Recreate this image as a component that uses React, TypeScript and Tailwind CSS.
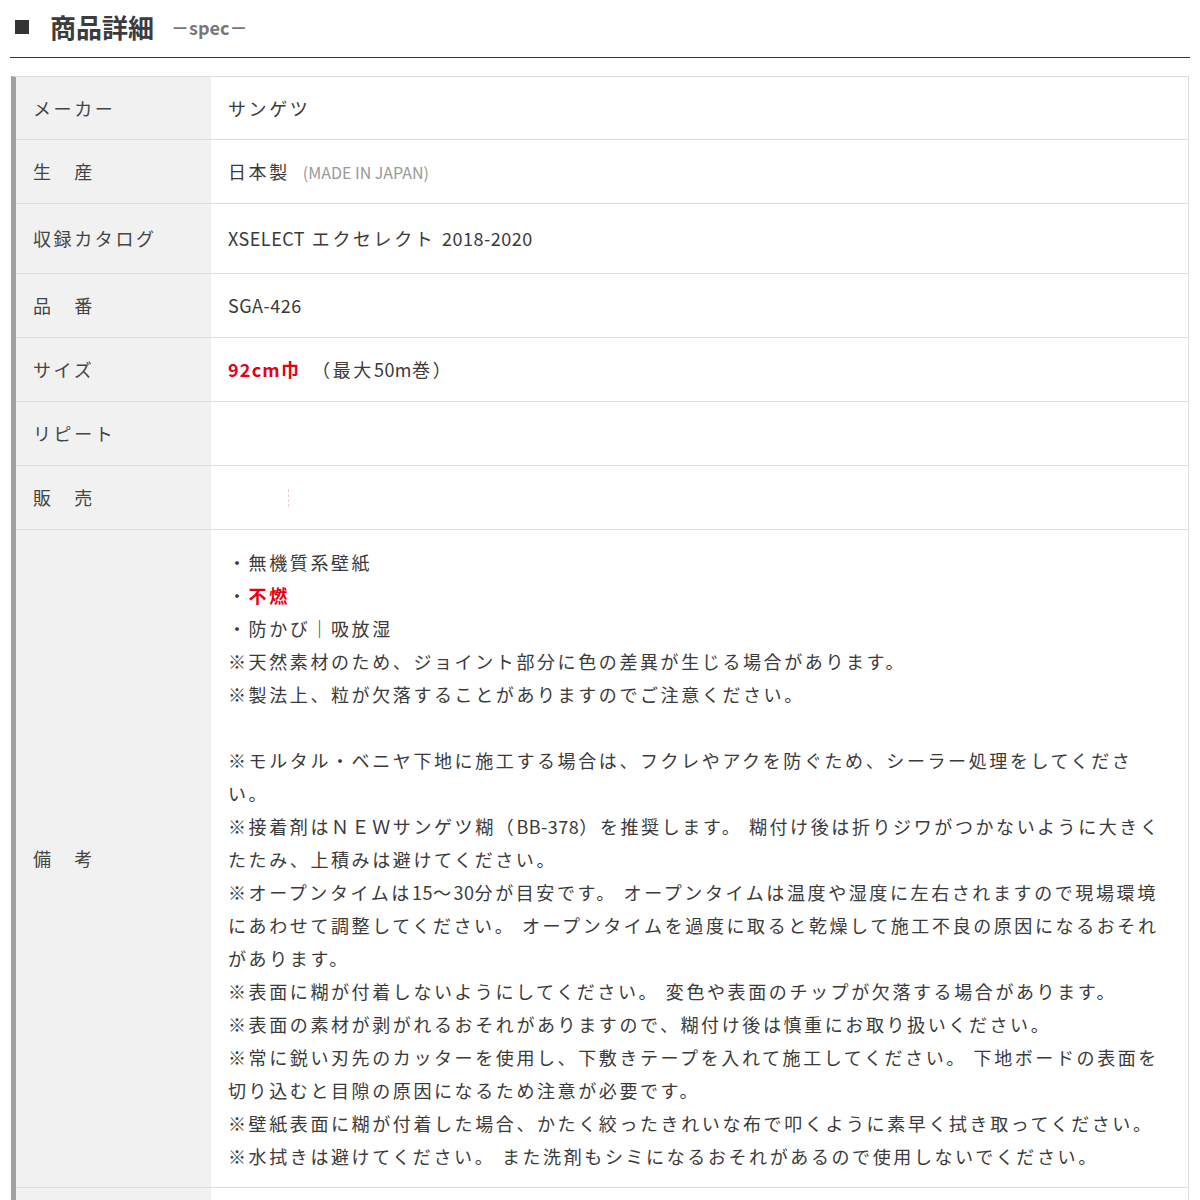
import React from "react";

const L: React.FC<{ children: React.ReactNode }> = ({ children }) => (
  <span className="tracking-[0.5px]">{children}</span>
);

const REMARKS: React.ReactNode[] = [
  "・無機質系壁紙",
  <>
    ・<span className="font-bold text-[#e60012]">不燃</span>
  </>,
  "・防かび｜吸放湿",
  "※天然素材のため、ジョイント部分に色の差異が生じる場合があります。",
  "※製法上、粒が欠落することがありますのでご注意ください。",
  "",
  "※モルタル・ベニヤ下地に施工する場合は、フクレやアクを防ぐため、シーラー処理をしてくださ",
  "い。",
  <>
    ※接着剤はＮＥＷサンゲツ糊（<L>BB-378</L>）を推奨します。 糊付け後は折りジワがつかないように大きく
  </>,
  "たたみ、上積みは避けてください。",
  <>
    ※オープンタイムは<L>15</L>～<L>30</L>分が目安です。 オープンタイムは温度や湿度に左右されますので現場環境
  </>,
  "にあわせて調整してください。 オープンタイムを過度に取ると乾燥して施工不良の原因になるおそれ",
  "があります。",
  "※表面に糊が付着しないようにしてください。 変色や表面のチップが欠落する場合があります。",
  "※表面の素材が剥がれるおそれがありますので、糊付け後は慎重にお取り扱いください。",
  "※常に鋭い刃先のカッターを使用し、下敷きテープを入れて施工してください。 下地ボードの表面を",
  "切り込むと目隙の原因になるため注意が必要です。",
  "※壁紙表面に糊が付着した場合、かたく絞ったきれいな布で叩くように素早く拭き取ってください。",
  "※水拭きは避けてください。 また洗剤もシミになるおそれがあるので使用しないでください。",
];

const Row: React.FC<{ label: string; h: string; children?: React.ReactNode }> = ({
  label,
  h,
  children,
}) => (
  <div className={`flex border-b border-[#dddddd] ${h}`}>
    <div className="w-[195px] shrink-0 bg-[#f1f1f1] pl-[17px] flex items-center text-[#444]">
      {label}
    </div>
    <div className="flex-1 pl-[17px] flex items-center text-[#3a3a3a]">{children}</div>
  </div>
);

const App: React.FC = () => {
  return (
    <div className="w-[1200px] min-h-[1200px] bg-white px-[10px] font-['Noto_Sans_CJK_JP',sans-serif]">
      {/* Heading */}
      <div className="h-[58px] flex items-center pl-[5px] pb-[4px] border-b border-[#333]">
        <span className="w-[14px] h-[14px] bg-[#333]"></span>
        <h2 className="ml-[21px] text-[26px] font-bold text-[#3c3c3c] leading-none">商品詳細</h2>
        <span className="ml-[17px] text-[18px] font-bold text-[#777] leading-none">－spec－</span>
      </div>

      {/* Spec table */}
      <div className="mt-[18px] mx-px border-t border-r border-[#dddddd] border-l-[5px] border-l-[#a0a0a0] text-[18px] tracking-[2.6px]">
        <Row label="メーカー" h="h-[63px]">
          サンゲツ
        </Row>
        <Row label="生　産" h="h-[64px]">
          日本製
          <span className="ml-[13px] text-[16px] tracking-normal text-[#999]">(MADE IN JAPAN)</span>
        </Row>
        <Row label="収録カタログ" h="h-[70px]">
          <L>XSELECT</L>&nbsp;エクセレクト&nbsp;<L>2018-2020</L>
        </Row>
        <Row label="品　番" h="h-[64px]">
          <L>SGA-426</L>
        </Row>
        <Row label="サイズ" h="h-[64px]">
          <span className="font-bold text-[#e60012] tracking-[1.2px]">92cm巾</span>
          <span className="ml-[12px]">
            （最大<L>50m</L>巻）
          </span>
        </Row>
        <Row label="リピート" h="h-[64px]"></Row>
        <Row label="販　売" h="h-[64px]">
          <span className="ml-[60px] h-[18px] border-l border-dashed border-[#f3c9c9]"></span>
        </Row>

        {/* Remarks */}
        <div className="flex border-b border-[#dddddd] h-[658px]">
          <div className="w-[195px] shrink-0 bg-[#f1f1f1] pl-[17px] flex items-center text-[#444]">
            備　考
          </div>
          <div className="flex-1 pl-[17px] pt-[16px] pb-[14px] text-[#3a3a3a] leading-[33px]">
            {REMARKS.map((line, index) => (
              <div key={index} className="h-[33px] whitespace-nowrap">
                {line}
              </div>
            ))}
          </div>
        </div>

        <Row label="" h="h-[64px]"></Row>
      </div>
    </div>
  );
};

export default App;
